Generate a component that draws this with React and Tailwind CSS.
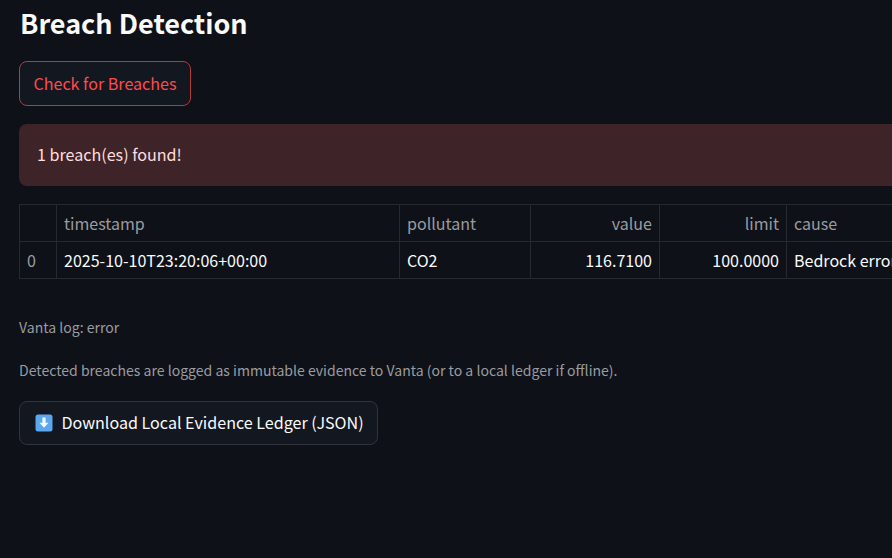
import React from "react";

const font = { fontFamily: '"Noto Sans CJK SC", "Noto Sans", sans-serif' };

function DownloadEmoji() {
  return (
    <svg width="18" height="18" viewBox="0 0 18 18" className="shrink-0">
      <rect x="0.5" y="0.5" width="17" height="17" rx="2.5" fill="#5BA8EE" />
      <path d="M7.4 3.5h3.2v5.2h2.9L9 13.8 4.5 8.7h2.9z" fill="#F4F8FC" />
    </svg>
  );
}

function Th({ w, right, children }) {
  return (
    <div className={`${w} h-[36px] shrink-0 border-r border-[#262930] flex items-center px-[7px] pb-px text-[#9a9ca1] ${right ? "justify-end" : ""}`}>
      {children}
    </div>
  );
}

function Td({ w, right, dim, children }) {
  return (
    <div className={`${w} h-[36px] shrink-0 border-r border-[#262930] flex items-center px-[7px] pb-px whitespace-nowrap overflow-hidden ${right ? "justify-end" : ""} ${dim ? "text-[#9a9ca1]" : "text-[#fafafa]"}`}>
      {children}
    </div>
  );
}

const cols = ["w-[37px]", "w-[343px]", "w-[131px]", "w-[129px]", "w-[127px]", "w-[300px]"];

export default function App() {
  return (
    <div style={font} className="w-[892px] h-[558px] overflow-hidden bg-[#0e1117] text-[#fafafa] pl-[19px]">
      <div className="w-[1000px]">
        <h1 className="text-[27px] leading-[38px] font-semibold mt-[4px] ml-px">Breach Detection</h1>

        <button className="mt-[19px] block h-[45px] w-[172px] pb-[2px] rounded-lg border border-[#b33a3f] bg-[#131720] text-[#ff4b4b] text-[16.1px] leading-[24px]">
          Check for Breaches
        </button>

        <div className="mt-[18px] h-[62px] pb-[2px] rounded-lg bg-[#3e2428] text-[#ffdede] text-[16.1px] leading-[24px] flex items-center pl-[18px]">
          1 breach(es) found!
        </div>

        <div className="mt-[18px] w-[1000px] border-t border-l border-[#262930] text-[16.05px] leading-[24px]">
          <div className="flex border-b border-[#262930]">
            <Th w={cols[0]}></Th>
            <Th w={cols[1]}>timestamp</Th>
            <Th w={cols[2]}>pollutant</Th>
            <Th w={cols[3]} right>value</Th>
            <Th w={cols[4]} right>limit</Th>
            <Th w={cols[5]}>cause</Th>
          </div>
          <div className="flex border-b border-[#262930]">
            <Td w={cols[0]} dim>0</Td>
            <Td w={cols[1]}>2025-10-10T23:20:06+00:00</Td>
            <Td w={cols[2]}>CO2</Td>
            <Td w={cols[3]} right>116.7100</Td>
            <Td w={cols[4]} right>100.0000</Td>
            <Td w={cols[5]}>Bedrock error</Td>
          </div>
        </div>

        <p className="mt-[38px] text-[14.05px] leading-[21px] text-[#9a9ca1]">Vanta log: error</p>
        <p className="mt-[22px] text-[14.05px] leading-[20px] text-[#9a9ca1]">
          Detected breaches are logged as immutable evidence to Vanta (or to a local ledger if offline).
        </p>

        <button className="mt-[21px] h-[44px] w-[359px] pl-[2px] rounded-lg border border-[#31343c] bg-[#131720] flex items-center justify-center gap-[8px] text-[16.1px] leading-[24px] text-[#fafafa]">
          <DownloadEmoji />
          <span className="pb-[2px]">Download Local Evidence Ledger (JSON)</span>
        </button>
      </div>
    </div>
  );
}
